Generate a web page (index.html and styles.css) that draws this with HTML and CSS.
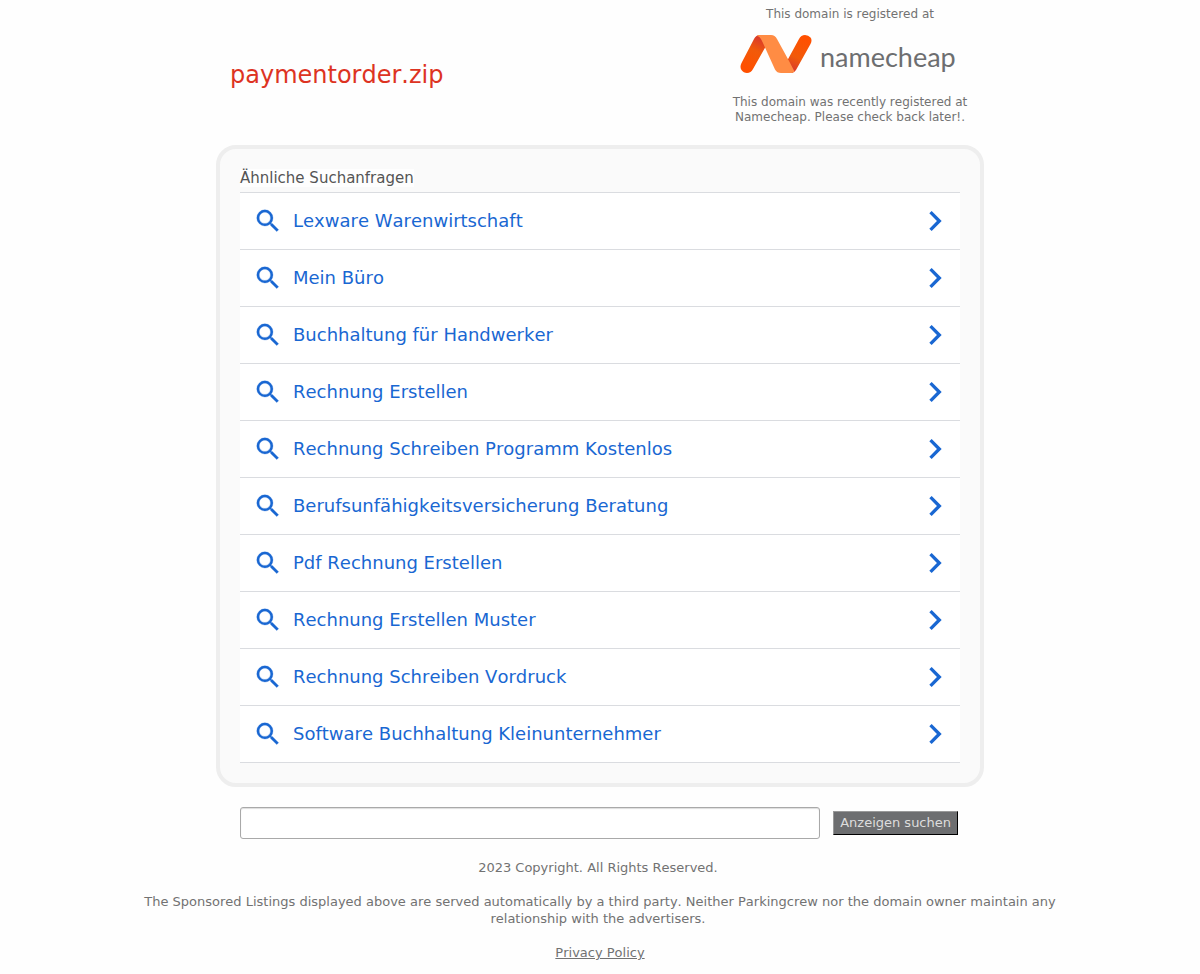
FILE: index.html
```html
<!DOCTYPE html>
<html lang="de">
<head>
<meta charset="utf-8">
<meta name="viewport" content="width=device-width, initial-scale=1">
<title>paymentorder.zip</title>
<link rel="stylesheet" href="styles.css">
</head>
<body>
<svg class="sprite" aria-hidden="true">
  <symbol id="search" viewBox="0 0 24 24"><path d="M15.5 14h-.79l-.28-.27A6.47 6.47 0 0 0 16 9.5 6.5 6.5 0 1 0 9.500 16c1.610 0 3.090-.59 4.230-1.570l.27.28v.79l5 4.990L20.490 19l-4.990-5zm-6 0C7.010 14 5 11.990 5 9.500S7.010 5 9.500 5 14 7.010 14 9.500 11.990 14 9.500 14z"/></symbol>
  <symbol id="chevron" viewBox="0 0 24 24"><path d="M10 6L8.590 7.410 13.170 12l-4.580 4.590L10 18l6-6z"/></symbol>
</svg>
<header class="header">
  <h1 class="domain">paymentorder.zip</h1>
  <div class="registrar">
    <p>This domain is registered at</p>
    <a class="logo" href="#" aria-label="namecheap">
      <svg class="logo-mark" viewBox="0 0 72 40" aria-hidden="true">
        <defs>
          <linearGradient id="left" x1="20" y1="4" x2="6" y2="34" gradientUnits="userSpaceOnUse"><stop offset="0" stop-color="#d93a2b"/><stop offset=".4" stop-color="#f15a0a"/><stop offset="1" stop-color="#ff5000"/></linearGradient>
          <linearGradient id="right" x1="52" y1="36" x2="66" y2="6" gradientUnits="userSpaceOnUse"><stop offset="0" stop-color="#d93a2b"/><stop offset=".4" stop-color="#f15a0a"/><stop offset="1" stop-color="#ff5000"/></linearGradient>
        </defs>
        <path fill="url(#left)" d="M20 1q-4 0-6 4L1.500 29q-2 4 0 7 2 3 5.500 3 4 0 6-4l13-23L23 3z"/>
        <path fill="url(#right)" d="M52 39q3-1 4-3l14.500-26q2-4 0-6.500Q68.500 1 65 1q-4 0-6 4L47 27l2 10z"/>
        <path fill="#ff8c44" d="M18 1h13q4 0 6 4l11.500 21 6 11.500q-1.500 1.500-4 1.500H41q-4 0-6-3.500L22.500 8Q20 2 17 2z"/>
      </svg>
      <span class="logo-name">namecheap</span>
    </a>
    <p>This domain was recently registered at Namecheap. Please check back later!.</p>
  </div>
</header>
<main class="main">
  <section class="panel">
    <h2 class="panel-title"><span>Ähnliche Suchanfragen</span></h2>
    <ul class="results">
      <li><a href="#"><svg class="icon"><use href="#search"/></svg><span>Lexware Warenwirtschaft</span><svg class="arrow"><use href="#chevron"/></svg></a></li>
      <li><a href="#"><svg class="icon"><use href="#search"/></svg><span>Mein Büro</span><svg class="arrow"><use href="#chevron"/></svg></a></li>
      <li><a href="#"><svg class="icon"><use href="#search"/></svg><span>Buchhaltung für Handwerker</span><svg class="arrow"><use href="#chevron"/></svg></a></li>
      <li><a href="#"><svg class="icon"><use href="#search"/></svg><span>Rechnung Erstellen</span><svg class="arrow"><use href="#chevron"/></svg></a></li>
      <li><a href="#"><svg class="icon"><use href="#search"/></svg><span>Rechnung Schreiben Programm Kostenlos</span><svg class="arrow"><use href="#chevron"/></svg></a></li>
      <li><a href="#"><svg class="icon"><use href="#search"/></svg><span>Berufsunfähigkeitsversicherung Beratung</span><svg class="arrow"><use href="#chevron"/></svg></a></li>
      <li><a href="#"><svg class="icon"><use href="#search"/></svg><span>Pdf Rechnung Erstellen</span><svg class="arrow"><use href="#chevron"/></svg></a></li>
      <li><a href="#"><svg class="icon"><use href="#search"/></svg><span>Rechnung Erstellen Muster</span><svg class="arrow"><use href="#chevron"/></svg></a></li>
      <li><a href="#"><svg class="icon"><use href="#search"/></svg><span>Rechnung Schreiben Vordruck</span><svg class="arrow"><use href="#chevron"/></svg></a></li>
      <li><a href="#"><svg class="icon"><use href="#search"/></svg><span>Software Buchhaltung Kleinunternehmer</span><svg class="arrow"><use href="#chevron"/></svg></a></li>
    </ul>
  </section>
  <form class="search">
    <input class="search-field" type="text" name="q" aria-label="Suche">
    <button class="search-button" type="submit">Anzeigen suchen</button>
  </form>
</main>
<footer class="footer">
  <p>2023 Copyright. All Rights Reserved.&nbsp;</p>
  <p>The Sponsored Listings displayed above are served automatically by a third party. Neither Parkingcrew nor the domain owner maintain any relationship with the advertisers.&nbsp;</p>
  <p><a href="#">Privacy Policy</a></p>
</footer>
</body>
</html>
```
FILE: styles.css
```css
* {
  box-sizing: border-box;
}

body {
  margin: 0;
  background: #fefefe;
  color: #727272;
  font: 13px/17px "DejaVu Sans", Verdana, sans-serif;
  font-kerning: none;
}

h1, h2, p, ul {
  margin: 0;
  padding: 0;
}

.sprite {
  display: none;
}

.header, .main {
  max-width: 768px;
  margin: 0 auto;
}

.header {
  display: flex;
  align-items: center;
  justify-content: space-between;
  padding: 7px 4px 20px 14px;
}

.domain {
  padding-top: 18px;
  color: #dd3322;
  font-size: 24px;
  line-height: 30px;
  font-weight: 400;
}

.registrar {
  width: 260px;
  font-size: 12px;
  line-height: 15px;
  text-align: center;
}

.logo {
  display: flex;
  align-items: flex-start;
  gap: 8px;
  height: 73px;
  padding: 12px 0 0 20px;
  color: #6d6e70;
  text-decoration: none;
}

.logo-mark {
  width: 72px;
  height: 40px;
}

.logo-name {
  padding-top: 4px;
  font: 400 27px/38px Lato, sans-serif;
}

.panel {
  padding: 20px;
  border: 4px solid #eee;
  border-radius: 20px;
  background: #fafafa;
}

.panel-title {
  display: flex;
  padding-bottom: 5px;
  color: #555;
  font-size: 15px;
  line-height: 18px;
  font-weight: 400;
}

.panel-title span {
  background: #fefefe;
}

.results {
  border-top: 1px solid #dadce0;
  background: #fff;
  list-style: none;
}

.results li {
  border-bottom: 1px solid #dadce0;
}

.results a {
  display: flex;
  align-items: center;
  min-height: 56px;
  padding: 0 5px 0 13px;
  color: #1967d2;
  font-size: 18px;
  line-height: 22px;
  text-decoration: none;
}

.results span {
  flex: 1;
  padding-left: 10px;
}

.icon, .arrow {
  fill: currentColor;
}

.icon {
  width: 30px;
  height: 30px;
  stroke: currentColor;
  stroke-width: .2;
}

.arrow {
  width: 40px;
  height: 40px;
}

.search {
  display: flex;
  align-items: center;
  gap: 13px;
  padding: 20px 26px 20px 24px;
}

.search-field {
  flex: 1;
  min-width: 0;
  height: 32px;
  padding: 0 8px;
  border: 1px solid #a9a9a9;
  border-radius: 3px;
  background: #fff;
  box-shadow: inset 0 1px 1px #ddd;
  font: inherit;
}

.search-button {
  height: 24px;
  padding: 0 6px 2px;
  border: 1px solid;
  border-color: #999 #000 #000 #999;
  background: #6d6e70;
  color: #ddd;
  font: inherit;
}

.footer {
  display: grid;
  gap: 17px;
  max-width: 960px;
  margin: 0 auto;
  padding-bottom: 12px;
  text-align: center;
}

.footer a {
  color: inherit;
}
```
